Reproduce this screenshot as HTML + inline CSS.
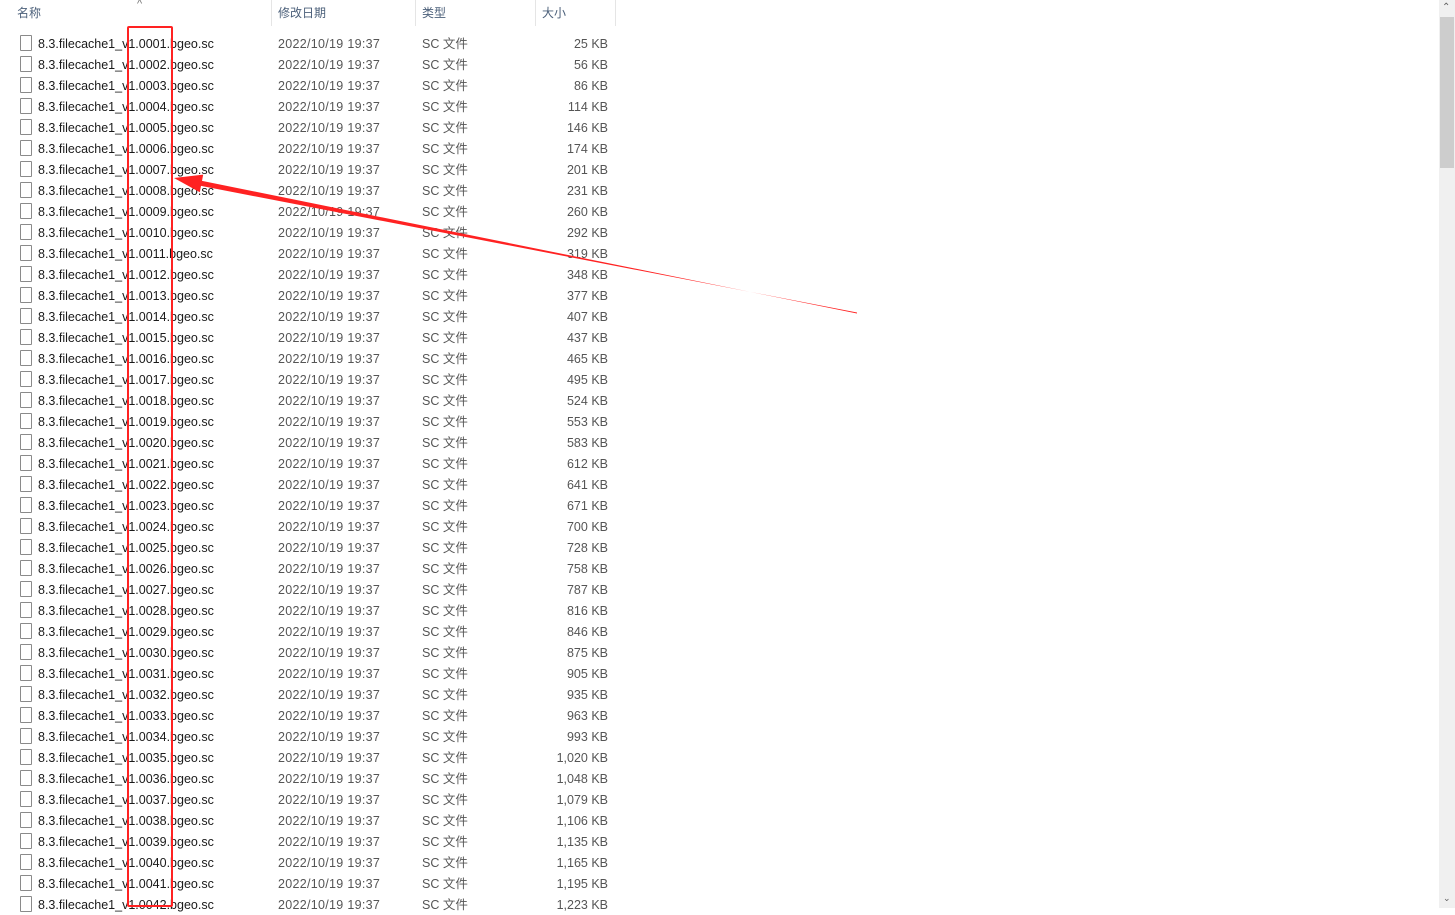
<!DOCTYPE html>
<html><head><meta charset="utf-8"><style>
body{margin:0;width:1455px;height:908px;overflow:hidden;background:#fff;font-family:"Liberation Sans","Noto Sans CJK SC",sans-serif;font-size:12px;color:#1a1a1a;position:relative}
.h{position:absolute;top:5px;color:#4c607a;font-size:12px;line-height:16px}
.d{position:absolute;top:0;width:1px;height:26px;background:#e5e5e5}
.r{position:absolute;left:0;height:21px;width:620px}
.r span{position:absolute;top:3px;white-space:nowrap;line-height:16px;font-size:12.5px}
.r i{position:absolute;left:20px;top:2px;width:10px;height:14px;border:1px solid #8a8a8a;border-radius:1px;background:#fff}
.n{left:38px}.t{left:278px;color:#555;letter-spacing:0.3px}.y{left:422px;color:#555}.s{right:12px;color:#555;text-align:right}
</style></head><body>
<div class="h" style="left:17px">名称</div>
<div style="position:absolute;left:137px;top:-2px;color:#777;font-size:11px">^</div>
<div class="h" style="left:278px">修改日期</div>
<div class="h" style="left:422px">类型</div>
<div class="h" style="left:542px">大小</div>
<div class="d" style="left:271px"></div><div class="d" style="left:415px"></div><div class="d" style="left:535px"></div><div class="d" style="left:615px"></div>
<div id="rows"></div>
<script>
var s=[25,56,86,114,146,174,201,231,260,292,319,348,377,407,437,465,495,524,553,583,612,641,671,700,728,758,787,816,846,875,905,935,963,993,"1,020","1,048","1,079","1,106","1,135","1,165","1,195","1,223"];
var h="";for(var i=0;i<42;i++){var n=String(i+1).padStart(4,"0");h+='<div class="r" style="top:'+(33+i*21)+'px"><i></i><span class="n">8.3.filecache1_v1.'+n+'.bgeo.sc</span><span class="t">2022/10/19 19:37</span><span class="y">SC 文件</span><span class="s">'+s[i]+' KB</span></div>';}
document.getElementById("rows").innerHTML=h;
</script>
<div style="position:absolute;left:1439px;top:0;width:16px;height:908px;background:#f0f0f0"></div>
<div style="position:absolute;left:1440px;top:17px;width:14px;height:151px;background:#cdcdcd"></div>
<div style="position:absolute;left:1442px;top:2px;color:#606060;font-size:10px">⌃</div>
<div style="position:absolute;left:1443px;top:893px;color:#606060;font-size:9px">⌄</div>
<div style="position:absolute;left:127px;top:26px;width:42px;height:877px;border:2px solid #f22;border-radius:2px"></div>
<svg style="position:absolute;left:0;top:0" width="1455" height="908"><polygon fill="#f22" points="174,178 203.2,174.6 202,180.9 857,313.5 857,312.5 201,185.9 199.8,192.2"/></svg>
</body></html>
